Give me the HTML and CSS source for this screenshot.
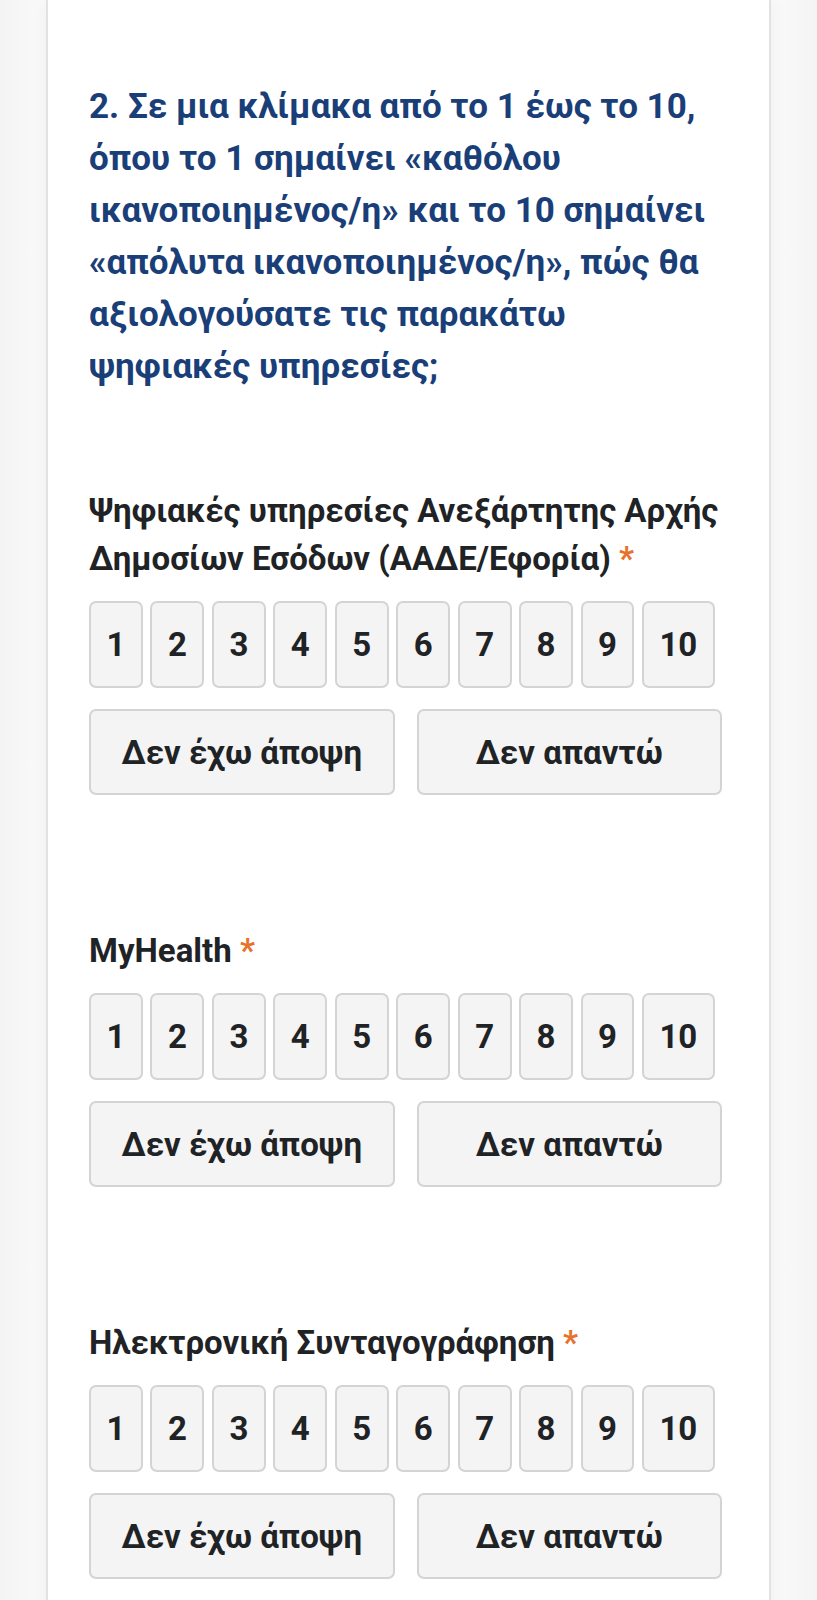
FILE: index.html
```html
<!DOCTYPE html>
<html lang="el">
<head>
<meta charset="utf-8">
<title>Ερωτηματολόγιο</title>
<link rel="stylesheet" href="styles.css">
</head>
<body>
<div class="page">
  <div class="card">
    <h2 class="question">2. Σε μια κλίμακα από το 1 έως το 10, όπου το 1 σημαίνει «καθόλου ικανοποιημένος/η» και το 10 σημαίνει «απόλυτα ικανοποιημένος/η», πώς θα αξιολογούσατε τις παρακάτω ψηφιακές υπηρεσίες;</h2>

    <div class="item">
      <div class="label">Ψηφιακές υπηρεσίες Ανεξάρτητης Αρχής Δημοσίων Εσόδων (ΑΑΔΕ/Εφορία) <span class="req">*</span></div>
      <div class="scale">
        <button class="num">1</button><button class="num">2</button><button class="num">3</button><button class="num">4</button><button class="num">5</button><button class="num">6</button><button class="num">7</button><button class="num">8</button><button class="num">9</button><button class="num">10</button>
      </div>
      <div class="extra">
        <button class="opt">Δεν έχω άποψη</button>
        <button class="opt">Δεν απαντώ</button>
      </div>
    </div>

    <div class="item">
      <div class="label">MyHealth <span class="req">*</span></div>
      <div class="scale">
        <button class="num">1</button><button class="num">2</button><button class="num">3</button><button class="num">4</button><button class="num">5</button><button class="num">6</button><button class="num">7</button><button class="num">8</button><button class="num">9</button><button class="num">10</button>
      </div>
      <div class="extra">
        <button class="opt">Δεν έχω άποψη</button>
        <button class="opt">Δεν απαντώ</button>
      </div>
    </div>

    <div class="item">
      <div class="label">Ηλεκτρονική Συνταγογράφηση <span class="req">*</span></div>
      <div class="scale">
        <button class="num">1</button><button class="num">2</button><button class="num">3</button><button class="num">4</button><button class="num">5</button><button class="num">6</button><button class="num">7</button><button class="num">8</button><button class="num">9</button><button class="num">10</button>
      </div>
      <div class="extra">
        <button class="opt">Δεν έχω άποψη</button>
        <button class="opt">Δεν απαντώ</button>
      </div>
    </div>
  </div>
</div>
</body>
</html>
```

FILE: styles.css
```css
html, body {
  margin: 0;
  padding: 0;
  background: #f6f6f6;
}

body {
  font-family: Roboto, "Noto Sans", "DejaVu Sans", sans-serif;
  color: #212529;
}

.page {
  padding: 0 46px;
  min-height: 1600px;
  background: linear-gradient(to right, #f4f4f4 0, #fafafa 46px, #fafafa calc(100% - 46px), #f4f4f4 100%);
}

.card {
  background: #ffffff;
  border-left: 2px solid #e2e2e2;
  border-right: 2px solid #e2e2e2;
  box-shadow: 0 0 16px rgba(0, 0, 0, 0.05);
  padding: 81px 47px 40px 41px;
  min-height: 1600px;
  box-sizing: border-box;
}

.question {
  margin: 0;
  font-size: 35px;
  line-height: 52px;
  font-weight: 700;
  color: #1a3f78;
}

.item {
  margin-top: 94px;
}

.item + .item {
  margin-top: 132px;
}

.label {
  font-size: 33px;
  line-height: 48px;
  font-weight: 700;
  color: #1f2326;
}

.req {
  color: #e8712b;
}

.scale {
  display: flex;
  gap: 7.5px;
  margin-top: 18px;
}

.num,
.opt {
  font-family: Roboto, "Noto Sans", "DejaVu Sans", sans-serif;
  font-weight: 700;
  color: #1f2326;
  background: #f4f4f4;
  border: 2px solid #d4d4d4;
  border-radius: 7px;
  box-sizing: border-box;
  margin: 0;
}

.num {
  height: 87px;
  padding: 0 15.5px;
  font-size: 33px;
}

.extra {
  display: grid;
  grid-template-columns: 1fr 1fr;
  gap: 22px;
  margin-top: 21px;
}

.opt {
  height: 86px;
  font-size: 33px;
  padding: 0 10px;
}
```
